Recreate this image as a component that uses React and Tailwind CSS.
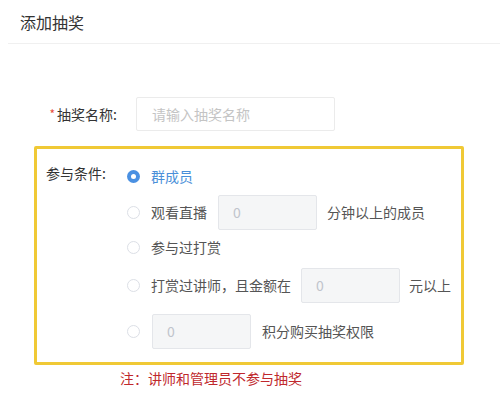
import React from "react";

function Radio({ checked }) {
  return checked ? (
    <span className="w-[13px] h-[13px] rounded-full bg-[#4a90e2] flex items-center justify-center shrink-0">
      <span className="w-[5px] h-[5px] rounded-full bg-white" />
    </span>
  ) : (
    <span className="w-[13px] h-[13px] rounded-full border border-[#dcdfe6] bg-white shrink-0" />
  );
}

function NumInput({ className = "" }) {
  return (
    <div className={"w-[99px] h-[35px] bg-[#f5f6f7] border border-[#e4e6ea] rounded-[2px] flex items-center pl-[14px] text-[14px] text-[#c0c4cc] " + className}>
      0
    </div>
  );
}

export default function App() {
  return (
    <div className="w-[500px] h-[395px] bg-white overflow-hidden text-[#555] [font-family:'Noto_Sans_CJK_SC','Noto_Sans',sans-serif]">
      <div className="h-[44px] flex items-center ml-[8px] pl-[12px] text-[16px] text-[#333] border-b border-[#f0f0f0]">
        添加抽奖
      </div>
      <div className="flex items-center mt-[53px] h-[34px]">
        <div className="w-[117px] flex justify-end items-center text-[14px] text-[#333]">
          <span className="text-[#e74c3c] mr-[2px] text-[12px]">*</span>
          <span>抽奖名称:</span>
        </div>
        <div className="ml-[19px] w-[199px] h-[34px] border border-[#ebebeb] rounded-[2px] flex items-center pl-[15px] text-[14px] text-[#c4c4c4]">
          请输入抽奖名称
        </div>
      </div>
      <div className="ml-[34px] mt-[15px] w-[430px] h-[219px] border-[3px] border-[#f0c935] rounded-[2px] flex pt-[14px]">
        <div className="w-[90px] pl-[9px] text-[14px] text-[#333] leading-[20px]">参与条件:</div>
        <div className="flex flex-col text-[14px]">
          <div className="h-[26px] flex items-center">
            <Radio checked />
            <span className="ml-[11px] text-[#4a8fd9]">群成员</span>
          </div>
          <div className="mt-[6px] h-[35px] flex items-center">
            <Radio />
            <span className="ml-[11px]">观看直播</span>
            <NumInput className="ml-[11px]" />
            <span className="ml-[10px]">分钟以上的成员</span>
          </div>
          <div className="mt-[5px] h-[24px] flex items-center">
            <Radio />
            <span className="ml-[11px]">参与过打赏</span>
          </div>
          <div className="mt-[9px] h-[35px] flex items-center">
            <Radio />
            <span className="ml-[11px]">打赏过讲师，且金额在</span>
            <NumInput className="ml-[10px]" />
            <span className="ml-[9px]">元以上</span>
          </div>
          <div className="mt-[11px] h-[35px] flex items-center">
            <Radio />
            <NumInput className="ml-[12px]" />
            <span className="ml-[11px]">积分购买抽奖权限</span>
          </div>
        </div>
      </div>
      <div className="mt-[3px] ml-[120px] text-[14px] leading-[20px] text-[#c0282d]">注：讲师和管理员不参与抽奖</div>
    </div>
  );
}
